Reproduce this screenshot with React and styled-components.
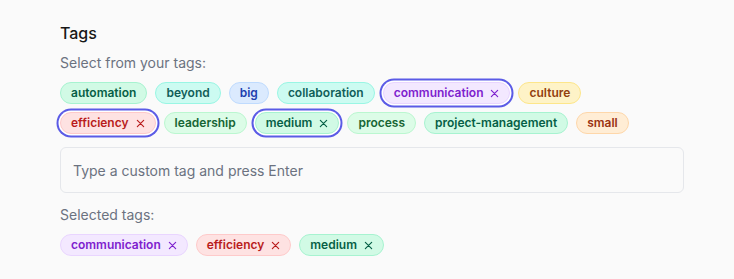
import styled, { createGlobalStyle, css } from "styled-components";

const GlobalStyle = createGlobalStyle`
  html, body {
    margin: 0;
    padding: 0;
    background: #fafafa;
  }
  body {
    font-family: Inter, "Noto Sans", sans-serif;
    -webkit-font-smoothing: antialiased;
  }
`;

const palette = {
  emerald: { bg: "#d1fae5", border: "#a7f3d0", fg: "#065f46" },
  teal: { bg: "#ccfbf1", border: "#99f6e4", fg: "#115e59" },
  blue: { bg: "#dbeafe", border: "#bfdbfe", fg: "#1e40af" },
  purple: { bg: "#f3e8ff", border: "#e9d5ff", fg: "#7e22ce" },
  amber: { bg: "#fef3c7", border: "#fde68a", fg: "#92400e" },
  red: { bg: "#fee2e2", border: "#fecaca", fg: "#b91c1c" },
  green: { bg: "#dcfce7", border: "#bbf7d0", fg: "#166534" },
  orange: { bg: "#ffedd5", border: "#fed7aa", fg: "#9a3412" },
};

const tags = [
  { name: "automation", color: "emerald" },
  { name: "beyond", color: "teal" },
  { name: "big", color: "blue" },
  { name: "collaboration", color: "teal" },
  { name: "communication", color: "purple" },
  { name: "culture", color: "amber" },
  { name: "efficiency", color: "red" },
  { name: "leadership", color: "green" },
  { name: "medium", color: "emerald" },
  { name: "process", color: "green" },
  { name: "project-management", color: "emerald" },
  { name: "small", color: "orange" },
];

const selected = ["communication", "efficiency", "medium"];

const Page = styled.div`
  padding: 21px 50px 24px 60px;
  display: flex;
  flex-direction: column;
`;

const Title = styled.h2`
  margin: 0;
  font-size: 16px;
  line-height: 24px;
  font-weight: 500;
  color: #171717;
`;

const Label = styled.div`
  margin-top: ${(p) => p.$top || 0}px;
  font-size: 14px;
  line-height: 20px;
  color: #6b7280;
`;

const TagList = styled.div`
  display: flex;
  flex-wrap: wrap;
  gap: 8px;
  max-width: 600px;
  margin-top: 9px;
`;

const Pill = styled.span`
  display: inline-flex;
  align-items: center;
  gap: 7px;
  height: 22px;
  box-sizing: border-box;
  padding: 0 10px;
  border-radius: 999px;
  border: 1px solid ${(p) => palette[p.$color].border};
  background: ${(p) => palette[p.$color].bg};
  color: ${(p) => palette[p.$color].fg};
  font-size: 12px;
  font-weight: 600;
  line-height: 16px;
  cursor: pointer;
  ${(p) =>
    p.$active &&
    css`
      box-shadow: 0 0 0 1.5px #ffffff, 0 0 0 3.5px #5b5be6;
    `}
`;

const Input = styled.input`
  margin-top: 13px;
  box-sizing: border-box;
  width: 100%;
  height: 46px;
  padding: 12px;
  border: 1px solid #e5e7eb;
  border-radius: 6px;
  background: #fafafa;
  font-family: inherit;
  font-size: 14px;
  color: #111827;
  outline: none;
  &::placeholder {
    color: #6b7280;
  }
`;

const Cross = () => (
  <svg width="9" height="9" viewBox="0 0 10 10" fill="none">
    <path d="M1.5 1.5l7 7M8.5 1.5l-7 7" stroke="currentColor" strokeWidth="1.3" strokeLinecap="round" />
  </svg>
);

export default function App() {
  const colorOf = (n) => tags.find((t) => t.name === n).color;
  return (
    <Page>
      <GlobalStyle />
      <Title>Tags</Title>
      <Label $top={8}>Select from your tags:</Label>
      <TagList>
        {tags.map((t) => {
          const on = selected.includes(t.name);
          return (
            <Pill key={t.name} $color={t.color} $active={on}>
              {t.name}
              {on && <Cross />}
            </Pill>
          );
        })}
      </TagList>
      <Input placeholder="Type a custom tag and press Enter" />
      <Label $top={12}>Selected tags:</Label>
      <TagList>
        {selected.map((n) => (
          <Pill key={n} $color={colorOf(n)}>
            {n}
            <Cross />
          </Pill>
        ))}
      </TagList>
    </Page>
  );
}
